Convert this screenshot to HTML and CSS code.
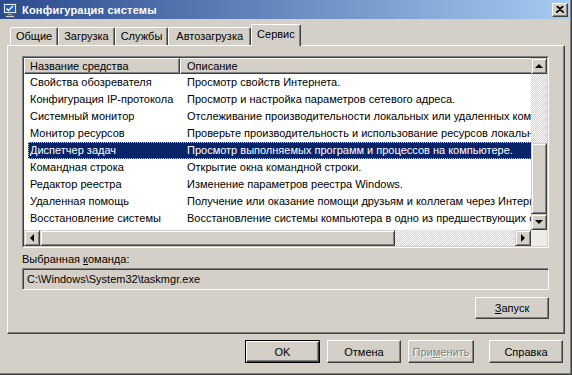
FILE: index.html
```html
<html>
    <head>
        <meta charset="utf-8">
        <link rel="stylesheet" href="styles.css">
    </head>
    <body>
        <div class="window">
            <div class="titlebar">
                <svg class="app-icon" width="16" height="16" viewBox="0 0 16 16">
                    <rect x="1.5" y="1.5" width="13" height="10" fill="#e8e8e8" stroke="#5a5a5a"/>
                    <rect x="3" y="3" width="10" height="7" fill="#1c5fc8"/>
                    <path d="M4.5 6.5 L6.5 8.5 L11 4" stroke="#fff" stroke-width="1.4" fill="none"/>
                    <rect x="6" y="12" width="4" height="2" fill="#9a9a9a"/>
                    <rect x="3.5" y="13.5" width="9" height="2" fill="#cfcfcf" stroke="#5a5a5a" stroke-width="1"/>
                </svg>
                <span class="title">Конфигурация системы</span>
                <div class="close">
                    <svg width="8" height="7" viewBox="0 0 8 7">
                        <path d="M0.5 0 L7.5 7 M1.5 0 L8 6.5 M7.5 0 L0.5 7 M6.5 0 L0 6.5" stroke="#000" stroke-width="1.1" fill="none"/>
                    </svg>
                </div>
            </div>

            <div class="tabs">
                <div class="tab">Общие</div>
                <div class="tab">Загрузка</div>
                <div class="tab">Службы</div>
                <div class="tab wide">Автозагрузка</div>
                <div class="tab active">Сервис</div>
            </div>

            <div class="panel">
                <div class="listview">
                    <div class="lv">
                        <div class="lv-body">
                            <div class="lv-table">
                                <div class="lv-header">
                                    <div class="hcell col-name">Название средства</div>
                                    <div class="hcell col-desc">Описание</div>
                                </div>
                                <div class="row"><div class="c1">Свойства обозревателя</div><div class="c2">Просмотр свойств Интернета.</div></div>
                                <div class="row"><div class="c1">Конфигурация IP-протокола</div><div class="c2">Просмотр и настройка параметров сетевого адреса.</div></div>
                                <div class="row"><div class="c1">Системный монитор</div><div class="c2">Отслеживание производительности локальных или удаленных компьютеров.</div></div>
                                <div class="row"><div class="c1">Монитор ресурсов</div><div class="c2">Проверьте производительность и использование ресурсов локального компьютера.</div></div>
                                <div class="row sel"><div class="c1">Диспетчер задач</div><div class="c2">Просмотр выполняемых программ и процессов на компьютере.</div></div>
                                <div class="row"><div class="c1">Командная строка</div><div class="c2">Открытие окна командной строки.</div></div>
                                <div class="row"><div class="c1">Редактор реестра</div><div class="c2">Изменение параметров реестра Windows.</div></div>
                                <div class="row"><div class="c1">Удаленная помощь</div><div class="c2">Получение или оказание помощи друзьям и коллегам через Интернет.</div></div>
                                <div class="row"><div class="c1">Восстановление системы</div><div class="c2">Восстановление системы компьютера в одно из предшествующих состояний.</div></div>
                            </div>
                        </div>
                        <div class="vscroll">
                            <div class="sbtn"><span class="arrow up"></span></div>
                            <div class="track"></div>
                            <div class="thumb vthumb"></div>
                            <div class="sbtn"><span class="arrow down"></span></div>
                        </div>
                        <div class="hscroll">
                            <div class="sbtn"><span class="arrow left"></span></div>
                            <div class="thumb hthumb"></div>
                            <div class="track"></div>
                            <div class="sbtn"><span class="arrow right"></span></div>
                        </div>
                        <div class="corner"></div>
                    </div>
                </div>

                <div class="cmd-label">Выбранная <u>к</u>оманда:</div>
                <div class="cmd-box">C:\Windows\System32\taskmgr.exe</div>
                <div class="run-row">
                    <div class="btn"><u>З</u>апуск</div>
                </div>
            </div>

            <div class="footer">
                <div class="btn default">OK</div>
                <div class="btn">Отмена</div>
                <div class="btn disabled apply">При<u>м</u>енить</div>
                <div class="btn help">Справка</div>
            </div>
        </div>
    </body>
</html>
```

FILE: styles.css
```css
*{
    box-sizing: border-box;
}
body{
    margin: 0;
    font-family: "Liberation Sans", Arial, sans-serif;
    font-size: 11px;
    color: #000;
    background: #d4d0c8;
}
u{
    text-decoration: underline;
    text-underline-offset: 1px;
}

.window{
    width: 572px;
    height: 375px;
    background: #d4d0c8;
    border-right: 1px solid #404040;
    border-bottom: 1px solid #404040;
    box-shadow: inset -1px -1px #808080;
    overflow: hidden;
}

/* title bar */
.titlebar{
    height: 19px;
    margin-right: 2px;
    display: flex;
    align-items: center;
    padding-left: 2px;
    background: linear-gradient(90deg, #2a4a8e, #a6caf0);
}
.app-icon{
    flex: none;
}
.title{
    margin-left: 4px;
    color: #fff;
    font-weight: bold;
    font-size: 11px;
    letter-spacing: 0.2px;
}
.close{
    margin-left: auto;
    margin-right: 1px;
    width: 16px;
    height: 14px;
    display: flex;
    align-items: center;
    justify-content: center;
    background: #d4d0c8;
    border: 1px solid;
    border-color: #fff #404040 #404040 #fff;
    box-shadow: inset -1px -1px #808080;
}

/* tabs */
.tabs{
    display: flex;
    align-items: flex-end;
    height: 21px;
    margin-top: 5px;
    padding-left: 10px;
}
.tab{
    height: 18px;
    line-height: 16px;
    padding: 0 5px;
    border: 1px solid;
    border-bottom: none;
    border-color: #fff #404040 #fff #fff;
    box-shadow: inset -1px 0 #808080;
    border-radius: 2px 2px 0 0;
    white-space: nowrap;
}
.tab.wide{
    padding: 0 7px;
}
.tab.active{
    height: 22px;
    margin-bottom: -1px;
    padding: 1px 5px 0;
    background: #d4d0c8;
    position: relative;
    z-index: 1;
}

/* tab page */
.panel{
    margin-left: 7px;
    width: 558px;
    height: 289px;
    padding: 10px 15px 0 14px;
    border: 1px solid;
    border-color: #fff #404040 #404040 #fff;
    box-shadow: inset -1px -1px #808080;
}

.listview{
    height: 192px;
    border: 1px solid;
    border-color: #808080 #fff #fff #808080;
}
.lv{
    height: 100%;
    border: 1px solid;
    border-color: #404040 #d4d0c8 #d4d0c8 #404040;
    background: #fff;
    display: grid;
    grid-template-columns: 1fr 16px;
    grid-template-rows: 1fr 16px;
}
.lv-body{
    overflow: hidden;
}
.lv-table{
    width: 800px;
}
.lv-header{
    display: flex;
    height: 16px;
}
.hcell{
    height: 16px;
    line-height: 14px;
    background: #d4d0c8;
    border: 1px solid;
    border-color: #fff #404040 #404040 #fff;
    box-shadow: inset -1px -1px #808080;
    white-space: nowrap;
}
.col-name{
    width: 156px;
    padding-left: 5px;
}
.col-desc{
    flex: 1;
    padding-left: 6px;
}
.row{
    display: flex;
    height: 17px;
    line-height: 17px;
    margin-left: 4px;
    white-space: nowrap;
}
.c1{
    width: 152px;
    padding-left: 2px;
}
.c2{
    padding-left: 7px;
}
.row.sel{
    background: #0a246a;
    color: #fff;
    outline: 1px dotted #c8c4bc;
    outline-offset: -1px;
}

/* scrollbars */
.vscroll{
    display: flex;
    flex-direction: column;
}
.hscroll{
    display: flex;
}
.track{
    flex: 1;
    background: repeating-conic-gradient(#fff 0 25%, #d4d0c8 0 50%) 0 0 / 2px 2px;
}
.sbtn, .thumb{
    flex: none;
    background: #d4d0c8;
    border: 1px solid;
    border-color: #d4d0c8 #404040 #404040 #d4d0c8;
    box-shadow: inset 1px 1px #fff, inset -1px -1px #808080;
}
.sbtn{
    width: 16px;
    height: 16px;
    display: flex;
    align-items: center;
    justify-content: center;
}
.vthumb{
    height: 71px;
}
.hthumb{
    width: 355px;
}
.arrow{
    width: 0;
    height: 0;
    border: 4px solid transparent;
}
.arrow.up{
    border-top: none;
    border-bottom-color: #000;
    margin-top: -1px;
}
.arrow.down{
    border-bottom: none;
    border-top-color: #000;
}
.arrow.left{
    border-left: none;
    border-right-color: #000;
}
.arrow.right{
    border-right: none;
    border-left-color: #000;
}
.corner{
    background: #eeece8;
}

/* command */
.cmd-label{
    margin-top: 5px;
    line-height: 13px;
}
.cmd-box{
    margin-top: 2px;
    height: 22px;
    line-height: 20px;
    padding-left: 4px;
    border: 1px solid;
    border-color: #808080 #fff #fff #808080;
    box-shadow: inset 1px 1px #404040, inset -1px -1px #d4d0c8;
}
.run-row{
    display: flex;
    justify-content: flex-end;
    margin-top: 7px;
}

/* buttons */
.btn{
    width: 74px;
    height: 22px;
    display: flex;
    align-items: center;
    justify-content: center;
    background: #d4d0c8;
    border: 1px solid;
    border-color: #fff #404040 #404040 #fff;
    box-shadow: inset -1px -1px #808080;
}
.footer{
    display: flex;
    justify-content: flex-end;
    margin-top: 6px;
    padding-right: 8px;
}
.footer .btn{
    height: 23px;
    margin-left: 7px;
}
.btn.default{
    width: 75px;
    border-color: #000;
    box-shadow: inset 1px 1px #fff, inset -1px -1px #404040, inset -2px -2px #808080;
}
.btn.apply{
    width: 66px;
}
.footer .btn.help{
    margin-left: 15px;
}
.btn.disabled{
    color: #808080;
    text-shadow: 1px 1px #fff;
}
```
